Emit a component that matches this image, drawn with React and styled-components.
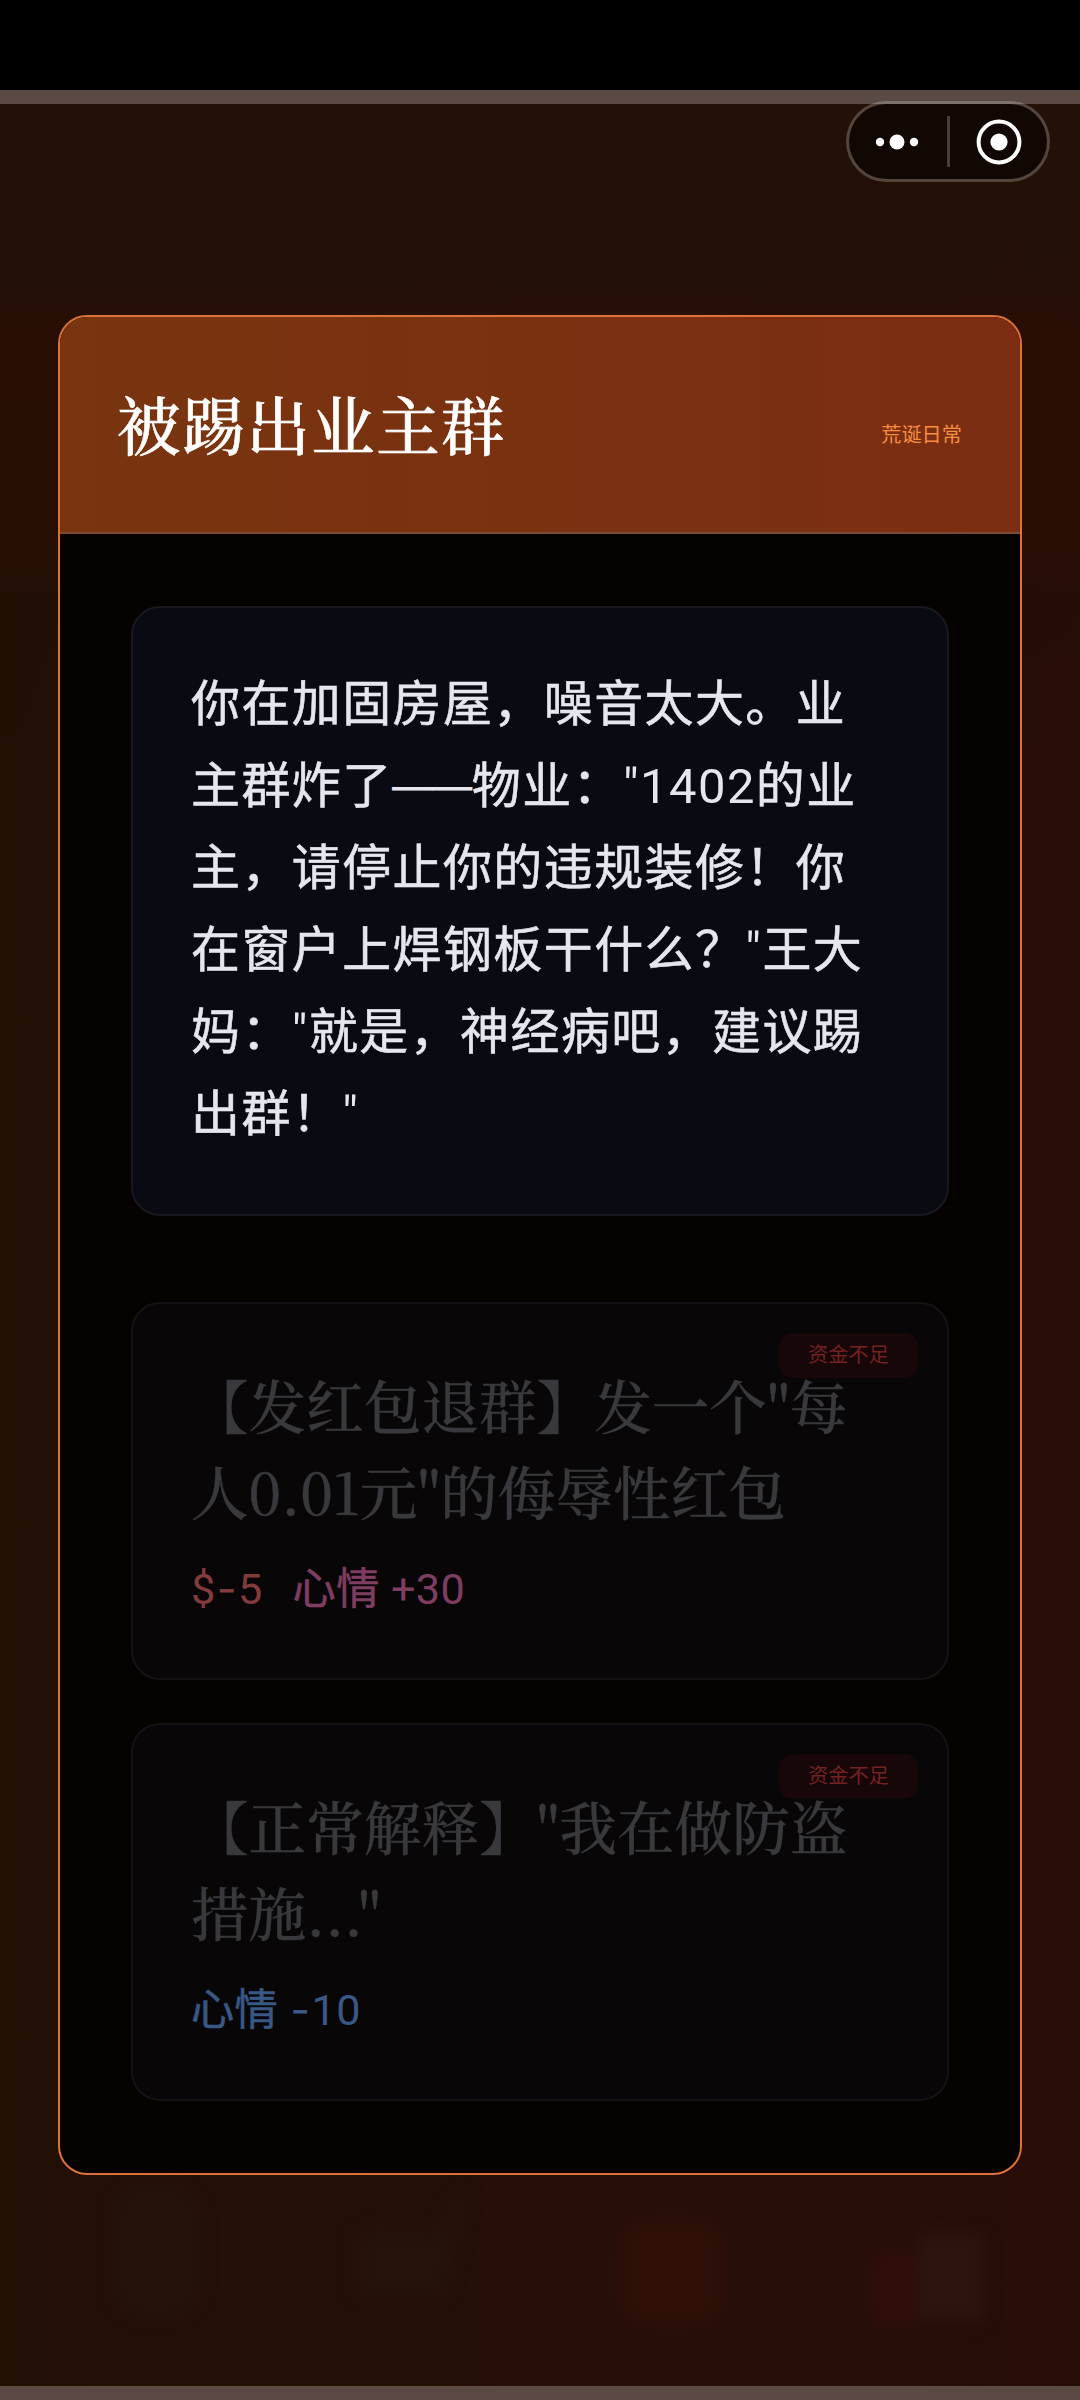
import React from "react";
import styled, { createGlobalStyle } from "styled-components";

const sans = `Roboto, "Noto Sans CJK SC", sans-serif`;
const serif = `"Noto Serif CJK SC", "Noto Serif SC", "Source Han Serif SC", "Songti SC", "Liberation Serif", "Noto Sans CJK SC", serif`;

const GlobalStyle = createGlobalStyle`
  body { margin: 0; background: #000; }
  * { box-sizing: border-box; }
`;

const Screen = styled.div`
  width: 1080px;
  height: 2400px;
  display: flex;
  flex-direction: column;
  background: #000;
  font-family: ${sans};
  text-spacing-trim: space-all;
  overflow: hidden;
`;
const StatusBar = styled.div`
  height: 90px;
  flex: none;
  background: #000;
`;
const Edge = styled.div`
  height: 14px;
  flex: none;
  background: #5b4a43;
`;
const Backdrop = styled.main`
  position: relative;
  flex: 1;
  display: flex;
  flex-direction: column;
  align-items: center;
  padding-top: 211px;
  background:
    linear-gradient(180deg, #231006 0, rgba(35, 16, 6, 0.95) 180px, rgba(42, 14, 5, 0.7) 225px, rgba(42, 14, 5, 0.6) 440px, rgba(33, 15, 4, 0.3) 490px, rgba(36, 15, 6, 0) 700px),
    linear-gradient(90deg, #231005 0%, #250f06 50%, #250f06 85%, #280d06 100%);
`;
const Capsule = styled.div`
  position: absolute;
  top: -3px;
  right: 30px;
  width: 204px;
  height: 81px;
  border: 3px solid rgba(255, 255, 255, 0.22);
  border-radius: 41px;
  background: rgba(0, 0, 0, 0.5);
  background-clip: padding-box;
  display: flex;
  align-items: center;
`;
const CapsuleButton = styled.button`
  flex: 1;
  height: 100%;
  padding: ${(p) => p.$pad};
  border: 0;
  background: none;
  display: flex;
  align-items: center;
  justify-content: center;
`;
const CapsuleRule = styled.span`
  width: 3px;
  height: 51px;
  background: rgba(255, 255, 255, 0.22);
`;
const Dock = styled.svg`
  position: absolute;
  left: 0;
  bottom: 0;
  width: 1080px;
  height: 260px;
  filter: blur(8px);
`;

const Modal = styled.section`
  position: relative;
  width: 964px;
  height: 1860px;
  border: 2px solid #dd7238;
  border-radius: 29px;
  background: #050200;
  overflow: hidden;
  display: flex;
  flex-direction: column;
`;
const Header = styled.header`
  height: 217px;
  flex: none;
  display: flex;
  align-items: center;
  justify-content: space-between;
  padding: 3px 58px 0 57px;
  background: linear-gradient(90deg, #78350f, #7c2d12);
  border-bottom: 2px solid #7c4a31;
`;
const Title = styled.h1`
  margin: 0;
  padding-bottom: 6px;
  font: 500 63.4px/90px ${serif};
  letter-spacing: 1.4px;
  color: #fff;
  -webkit-text-stroke: 0.6px currentColor;
`;
const Tag = styled.span`
  padding-top: 18px;
  font-size: 20.2px;
  line-height: 30px;
  color: #f58d42;
`;
const Body = styled.div`
  flex: 1;
  display: flex;
  flex-direction: column;
  gap: 43px;
  padding: 72px 71px 0;
`;
const Story = styled.div`
  height: 610px;
  margin-bottom: 43px;
  padding: 56px 0 0 58px;
  border: 2px solid #18181e;
  border-radius: 29px;
  background: #0a0a12;
  color: #e6e6ee;
  font-size: 48.96px;
  line-height: 82px;
  letter-spacing: 1.44px;
  white-space: nowrap;
`;
const Line = styled.div`
  height: 82px;
`;
const Han = styled.span`
  -webkit-text-stroke: 0.55px currentColor;
`;
const Dash = styled.span`
  font-family: "Liberation Sans", sans-serif;
  font-size: 39.6px;
  line-height: 1;
  letter-spacing: 0;
  position: relative;
  top: -4px;
  -webkit-text-stroke: 1px currentColor;
`;
const Hyphen = styled.span`
  font-family: Inter, sans-serif;
  line-height: 1;
  padding: 0 1px;
`;
const Choice = styled.button`
  position: relative;
  height: 378px;
  display: flex;
  flex-direction: column;
  align-items: flex-start;
  padding: 57px 0 0 58px;
  border: 2px solid #131315;
  border-radius: 29px;
  background: #080607;
  text-align: left;
  font-family: ${sans};
`;
const ChoiceText = styled.div`
  font: 500 57.6px/86px ${serif};
  color: #38383d;
  white-space: nowrap;
  -webkit-text-stroke: 0.3px currentColor;
`;
const Effects = styled.div`
  display: flex;
  gap: 30px;
  margin-top: 24px;
  font-size: 43.2px;
  line-height: 66px;
  letter-spacing: 0.4px;
`;
const Effect = styled.span`
  color: ${(p) => p.$color};
`;
const Shortage = styled.span`
  position: absolute;
  top: 29px;
  right: 29px;
  width: 139px;
  height: 45px;
  border-radius: 14px;
  background: #180708;
  color: #762122;
  font-size: 20.2px;
  line-height: 44px;
  text-align: center;
`;

const story = [
  "你在加固房屋，噪音太大。业",
  "主群炸了——物业：\"1402的业",
  "主，请停止你的违规装修！你",
  "在窗户上焊钢板干什么？\"王大",
  "妈：\"就是，神经病吧，建议踢",
  "出群！\"",
];

const choices = [
  {
    lines: ["【发红包退群】发一个\"每", "人0.01元\"的侮辱性红包"],
    effects: [["$-5", "#813c3b"], ["心情 +30", "#7f3d62"]],
  },
  {
    lines: ["【正常解释】\"我在做防盗", "措施...\""],
    effects: [["心情 -10", "#385886"]],
  },
];

function Mixed({ children }) {
  return children.match(/—+|-|[\x20-\x2c\x2e-\x7e]+|[^\x00-\x7f—]+/g).map((part, i) => {
    if (part[0] === "—") return <Dash key={i}>{part}</Dash>;
    if (part === "-") return <Hyphen key={i}>{part}</Hyphen>;
    if (part.charCodeAt(0) > 127) return <Han key={i}>{part}</Han>;
    return part;
  });
}

export default function App() {
  return (
    <Screen>
      <GlobalStyle />
      <StatusBar />
      <Edge />
      <Backdrop>
        <Dock viewBox="0 0 1080 260">
          <rect x="115" y="60" width="85" height="130" rx="30" fill="#25130b" />
          <path d="M358 105h82l14-36h14l-22 100h-88z" fill="#25130c" />
          <rect x="616" y="90" width="110" height="112" rx="34" fill="#2e1008" />
          <rect x="868" y="125" width="50" height="76" rx="10" fill="#2f0e08" />
          <rect x="918" y="108" width="66" height="86" fill="#2b150e" />
        </Dock>
        <Modal>
          <Header>
            <Title>被踢出业主群</Title>
            <Tag>荒诞日常</Tag>
          </Header>
          <Body>
            <Story>
              {story.map((l) => (
                <Line key={l}><Mixed>{l}</Mixed></Line>
              ))}
            </Story>
            {choices.map((c, i) => (
              <Choice key={i}>
                <Shortage>资金不足</Shortage>
                {c.lines.map((l) => (
                  <ChoiceText key={l}>{l}</ChoiceText>
                ))}
                <Effects>
                  {c.effects.map(([t, color]) => (
                    <Effect key={t} $color={color}><Mixed>{t}</Mixed></Effect>
                  ))}
                </Effects>
              </Choice>
            ))}
          </Body>
        </Modal>
        <Capsule>
          <CapsuleButton aria-label="more" $pad="0 2px 0 0">
            <svg width="44" height="16" viewBox="0 0 44 16" fill="#fff">
              <circle cx="5" cy="8" r="4.2" />
              <circle cx="22" cy="8" r="7.5" />
              <circle cx="39" cy="8" r="4.2" />
            </svg>
          </CapsuleButton>
          <CapsuleRule />
          <CapsuleButton aria-label="close" $pad="0 0 0 2px">
            <svg width="46" height="46" viewBox="0 0 46 46">
              <circle cx="23" cy="23" r="20.4" fill="none" stroke="#fff" strokeWidth="4" />
              <circle cx="23" cy="23" r="8.6" fill="#fff" />
            </svg>
          </CapsuleButton>
        </Capsule>
      </Backdrop>
      <Edge />
    </Screen>
  );
}
